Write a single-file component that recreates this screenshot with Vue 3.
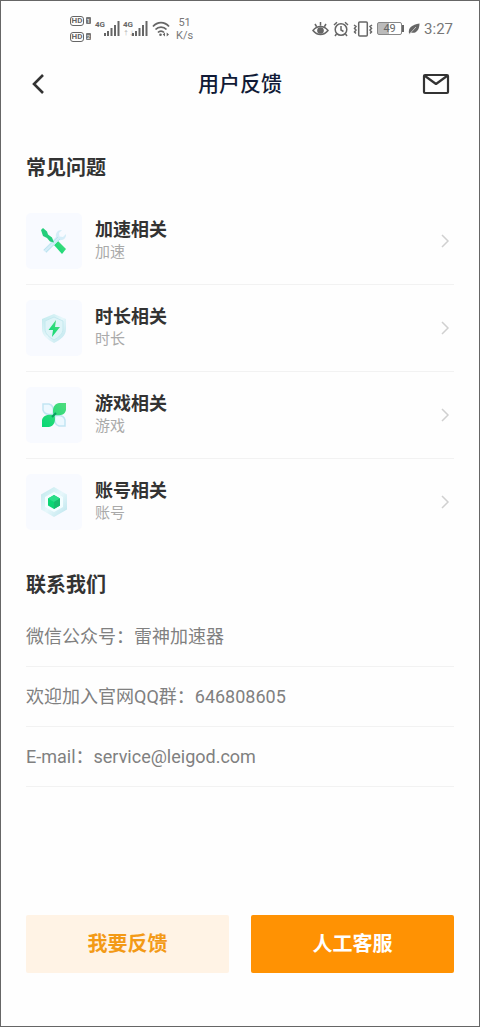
<script setup>
const topics = [
  { title: '加速相关', sub: '加速', icon: 'tools' },
  { title: '时长相关', sub: '时长', icon: 'shield' },
  { title: '游戏相关', sub: '游戏', icon: 'petals' },
  { title: '账号相关', sub: '账号', icon: 'cube' },
]
const contacts = [
  '微信公众号：雷神加速器',
  '欢迎加入官网QQ群：646808605',
  'E-mail：service@leigod.com',
]
</script>

<template>
  <div class="screen">
    <div class="status">
      <div class="cluster">
        <div class="hd-stack">
          <div v-for="n in 2" :key="n" class="hd"><span class="hd-tag">HD</span><span class="sim">{{ n }}</span></div>
        </div>
        <div v-for="n in 2" :key="n" class="signal">
          <div class="net"><span>4G</span><small v-if="n === 2">↑↓</small></div>
          <svg width="17" height="15" viewBox="0 0 17 15" fill="#666" aria-hidden="true">
            <rect x="0" y="12" width="2" height="3" /><rect x="3" y="10" width="2" height="5" /><rect x="6.5" y="7" width="2" height="8" /><rect x="10" y="4" width="2" height="11" /><rect x="13.5" y="0" width="2" height="15" />
          </svg>
        </div>
        <svg width="18" height="16" viewBox="0 0 18 16" fill="none" stroke="#666" stroke-width="1.8" aria-hidden="true">
          <path d="M1 5.5C5.500 .3 12.500 .3 17 5.500M3.500 8.500c3-3.300 8-3.300 11 0M6 11.500c1.700-1.800 4.300-1.800 6 0" />
          <circle cx="8.500" cy="13.700" r="1.300" fill="#666" stroke="none" />
          <path d="m13 11.500-2.300 2 2.300 2zm1.700 0 2.300 2-2.300 2z" fill="#666" stroke="none" />
        </svg>
        <div class="speed"><span>51</span><span>K/s</span></div>
      </div>
      <div class="cluster right">
        <svg width="17" height="16" viewBox="0 0 17 16" fill="none" stroke="#666" stroke-width="1.500" aria-hidden="true">
          <path d="M1 9.500c4-5.300 11-5.300 15 0-4 5.300-11 5.300-15 0ZM8.500 1v3.500M3 3l1.500 2.500M14 3l-1.500 2.500" />
          <circle cx="8.500" cy="9.500" r="2.600" fill="#666" />
        </svg>
        <svg width="16" height="16" viewBox="0 0 16 16" fill="none" stroke="#666" stroke-width="1.500" aria-hidden="true">
          <circle cx="8" cy="8.500" r="5.800" /><path d="M8 5v4l2.500 1.500M1 4l3-2.700M15 4l-3-2.700M3.500 13 2 15m10.500-2 1.500 2" />
        </svg>
        <svg width="20" height="16" viewBox="0 0 20 16" fill="none" stroke="#666" stroke-width="1.500" aria-hidden="true">
          <rect x="5.700" y="1" width="8.600" height="14" rx="1" /><path d="m1 4 2 1.500L1.500 7.500 3 9l-1.500 2 1.500 1.500M19 4l-2 1.500 1.500 2L17 9l1.500 2-1.500 1.500" />
        </svg>
        <div class="battery"><span>49</span></div>
        <svg width="12" height="12" viewBox="0 0 12 12" aria-hidden="true">
          <path d="M1 11C0 4 4 2 11.500 .5 11.500 7 8 11 3 9.500" fill="#666" /><path d="M1 11.500 8 4" stroke="#ddd" stroke-width=".8" />
        </svg>
        <span class="time">3:27</span>
      </div>
    </div>

    <header class="bar">
      <button class="icon-btn" aria-label="返回">
        <svg width="22" height="24" viewBox="0 0 22 24" fill="none" stroke="#333" stroke-width="2.600"><path d="M13 3 4 12l9 9" /></svg>
      </button>
      <h1>用户反馈</h1>
      <button class="icon-btn" aria-label="消息">
        <svg width="28" height="24" viewBox="0 0 28 24" fill="none" stroke="#333" stroke-width="2.200" stroke-linejoin="round"><rect x="2" y="3" width="24" height="18" rx="1" /><path d="m3 4 11 8L25 4" /></svg>
      </button>
    </header>

    <main>
      <section>
        <h2>常见问题</h2>
        <ul class="topics">
          <li v-for="t in topics" :key="t.title">
            <a href="#" class="topic">
              <span class="tile">
                <svg width="30" height="30" viewBox="0 0 30 30" aria-hidden="true">
                  <defs>
                    <linearGradient id="green" x1="1" y1="0" x2="0" y2="1"><stop offset="0" stop-color="#52dc7e" /><stop offset="1" stop-color="#06d875" /></linearGradient>
                    <linearGradient id="ice" x1="0" y1="0" x2="1" y2="1"><stop offset="0" stop-color="#bce8ec" /><stop offset=".5" stop-color="#e7f7fb" /><stop offset="1" stop-color="#b9e4ec" /></linearGradient>
                  </defs>
                  <g v-if="t.icon === 'tools'">
                    <path d="m15 19 4-4 8 8-4 5z" fill="url(#green)" />
                    <path d="M4 24 17 11c-.8-4 2-7.500 6-7l-3 3 .5 3.500 3.500.5 3-3c.5 4-3 7-7 6L7.500 27z" fill="#d5edf8" />
                    <path d="m5 24 14-13M7 26l14-13" stroke="#bce4ef" fill="none" />
                    <path d="m2 4 2-2 4 3.500 1 3 4 3 2 5-4-1-3-3.500-4-2z" fill="#25ce7c" />
                  </g>
                  <g v-else-if="t.icon === 'shield'">
                    <path d="m15 1 12 5v10c0 7-6 11-12 14C9 27 3 23 3 16V6z" fill="url(#ice)" />
                    <path d="m15 4 9 4v8c0 5-4 8-9 11-5-3-9-6-9-11V8z" fill="#dff4f8" stroke="#c4e9ef" />
                    <path d="M17 7 9.500 17H14l-1 7 8-10h-5z" fill="url(#green)" />
                  </g>
                  <g v-else-if="t.icon === 'petals'">
                    <path d="M4 4h6c4 1 5 5 4 10-5 1-9 0-10-4zM26 26h-6c-4-1-5-5-4-10 5-1 9 0 10 4z" fill="#edf8ff" stroke="#c2e5f3" stroke-width="1.500" />
                    <path d="M27 3h-7c-5 1-7 5-5.500 12C21 16 26 15 27 10zM3 27h7c5-1 7-5 5.500-12C9 14 4 15 3 20z" fill="url(#green)" />
                    <path d="m13 17 4-4" stroke="#079f60" stroke-width="2" />
                  </g>
                  <g v-else>
                    <path d="m15 0 13 7.500v15L15 30 2 22.500v-15z" fill="url(#ice)" />
                    <path d="m15 5 9 5v10l-9 5-9-5V10z" fill="#f3fdff" />
                    <path d="m15 8 6 3.500v7L15 22l-6-3.500v-7z" fill="#0bd574" />
                    <path d="m15 8 6 3.500-6 3.500-6-3.500z" fill="#2ade88" /><path d="m15 15 6-3.500v7L15 22z" fill="#16bd6e" />
                  </g>
                </svg>
              </span>
              <span class="words"><strong>{{ t.title }}</strong><span>{{ t.sub }}</span></span>
              <svg width="10" height="16" viewBox="0 0 10 16" fill="none" stroke="#d0d0d0" stroke-width="1.500" aria-hidden="true"><path d="m2 2 6 6-6 6" /></svg>
            </a>
          </li>
        </ul>
      </section>

      <section>
        <h2>联系我们</h2>
        <ul class="contacts">
          <li v-for="c in contacts" :key="c">{{ c }}</li>
        </ul>
      </section>
    </main>

    <footer class="actions">
      <button class="soft">我要反馈</button>
      <button class="solid">人工客服</button>
    </footer>
  </div>
</template>

<style>
body {
  background: #fff;
}
</style>

<style scoped>
.screen {
  box-sizing: border-box;
  min-height: 100vh;
  display: flex;
  flex-direction: column;
  border: 1px solid #666;
  background: #fefefe;
  color: #333;
  font-family: Roboto, "Noto Sans CJK SC", sans-serif;
}
.status {
  display: flex;
  justify-content: space-between;
  align-items: center;
  height: 55px;
  padding: 0 26px 0 69px;
  color: #666;
}
.cluster {
  display: flex;
  align-items: center;
  gap: 3px;
}
.cluster.right {
  gap: 4px;
}
.hd-stack {
  display: flex;
  flex-direction: column;
  gap: 6px;
  margin-right: 1px;
}
.hd {
  display: flex;
  align-items: center;
  gap: 2px;
}
.hd-tag {
  box-sizing: border-box;
  width: 14px;
  height: 10px;
  border: 1px solid #666;
  border-radius: 3px;
  font-size: 8px;
  line-height: 8px;
  font-weight: 700;
  text-align: center;
}
.sim {
  width: 5px;
  height: 7px;
  border-radius: 1px;
  background: #777;
  color: #fff;
  font-size: 6px;
  line-height: 7px;
  text-align: center;
}
.signal {
  display: flex;
  align-items: flex-start;
  height: 16px;
}
.signal svg {
  margin-left: -1px;
}
.signal + .signal {
  margin-left: -1px;
}
.net {
  display: flex;
  flex-direction: column;
  width: 10px;
  font-size: 8px;
  line-height: 8px;
  font-weight: 700;
}
.net small {
  font-size: 6px;
  font-weight: 400;
  line-height: 8px;
  color: #aaa;
}
.speed {
  display: flex;
  flex-direction: column;
  align-items: center;
  margin-left: 3px;
  font-size: 11px;
  line-height: 13px;
  color: #777;
}
.battery {
  position: relative;
  box-sizing: border-box;
  width: 25px;
  height: 13px;
  margin-right: 2px;
  border: 1px solid #888;
  border-radius: 2px;
  background: linear-gradient(90deg, #bbb 49%, #fff 49%);
  font-size: 11px;
  line-height: 11px;
  text-align: center;
}
.battery::after {
  content: "";
  position: absolute;
  top: 2px;
  right: -3px;
  width: 2px;
  height: 7px;
  background: #666;
}
.time {
  font-size: 15px;
  color: #777;
}
.bar {
  display: flex;
  justify-content: space-between;
  align-items: center;
  height: 56px;
  padding: 0 29px;
}
.icon-btn {
  display: flex;
  width: 28px;
  padding: 0;
  border: 0;
  background: none;
}
h1 {
  margin: 0;
  font-size: 21px;
  line-height: 32px;
  font-weight: 500;
  color: #101a36;
}
main {
  flex: 1;
  padding: 40px 25px 0;
}
h2 {
  margin: 0;
  font-size: 20px;
  line-height: 32px;
  font-weight: 700;
}
ul {
  margin: 0;
  padding: 0;
  list-style: none;
}
.topics {
  margin: 14px 0 24px;
}
.topics li {
  border-bottom: 1px solid #f2f2f2;
}
.topics li:last-child {
  border-bottom: 0;
}
.topic {
  display: flex;
  align-items: center;
  gap: 13px;
  padding: 15px 4px 15px 0;
  color: inherit;
  text-decoration: none;
}
.tile {
  display: flex;
  align-items: center;
  justify-content: center;
  width: 56px;
  height: 56px;
  border-radius: 5px;
  background: #f8faff;
}
.words {
  flex: 1;
  display: flex;
  flex-direction: column;
}
.words strong {
  font-size: 18px;
  line-height: 22px;
  font-weight: 700;
}
.words span {
  font-size: 15px;
  line-height: 22px;
  color: #aaa;
}
.contacts {
  margin-top: 6px;
}
.contacts li {
  border-bottom: 1px solid #f2f2f2;
  font-size: 18px;
  line-height: 59px;
  color: #808080;
}
.actions {
  display: flex;
  gap: 22px;
  padding: 0 25px 53px;
}
.actions button {
  flex: 1;
  height: 58px;
  padding: 0 0 4px;
  border: 0;
  border-radius: 2px;
  font-family: inherit;
  font-size: 20px;
  font-weight: 700;
}
.soft {
  background: #fff3e5;
  color: #f39a16;
}
.solid {
  background: #ff9203;
  color: #fff;
}
</style>
